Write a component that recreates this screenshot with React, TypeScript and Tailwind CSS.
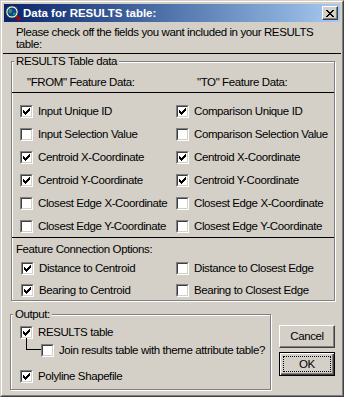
import React from "react";

const FONT = "font-['Liberation_Sans',Arial,sans-serif] tracking-[-0.4px]";

function Check({ checked }: { checked: boolean }) {
  return (
    <div className="w-[13px] h-[13px] shrink-0 border border-t-[#808080] border-l-[#808080] border-b-white border-r-white">
      <div className="w-full h-full border border-t-[#404040] border-l-[#404040] border-b-[#d4d0c8] border-r-[#d4d0c8] bg-white flex items-center justify-center">
        {checked && (
          <svg width="7" height="7" viewBox="0 0 7 7" shapeRendering="crispEdges">
            <rect x="6" y="0" width="1" height="1" fill="#000" />
            <rect x="5" y="1" width="2" height="1" fill="#000" />
            <rect x="0" y="2" width="1" height="1" fill="#000" />
            <rect x="4" y="2" width="3" height="1" fill="#000" />
            <rect x="0" y="3" width="2" height="1" fill="#000" />
            <rect x="3" y="3" width="3" height="1" fill="#000" />
            <rect x="0" y="4" width="5" height="1" fill="#000" />
            <rect x="1" y="5" width="3" height="1" fill="#000" />
            <rect x="2" y="6" width="1" height="1" fill="#000" />
          </svg>
        )}
      </div>
    </div>
  );
}

function Row({ checked, label }: { checked: boolean; label: string }) {
  return (
    <div className="flex items-center gap-[5px] h-[13px] whitespace-nowrap">
      <Check checked={checked} />
      <span className="leading-[13px]">{label}</span>
    </div>
  );
}

const etched =
  "min-w-0 border border-[#808080] shadow-[inset_1px_1px_0_#ffffff,1px_1px_0_#ffffff]";

export default function App() {
  const left: [boolean, string][] = [
    [true, "Input Unique ID"],
    [false, "Input Selection Value"],
    [true, "Centroid X-Coordinate"],
    [true, "Centroid Y-Coordinate"],
    [false, "Closest Edge X-Coordinate"],
    [false, "Closest Edge Y-Coordinate"],
  ];
  const right: [boolean, string][] = [
    [true, "Comparison Unique ID"],
    [false, "Comparison Selection Value"],
    [true, "Centroid X-Coordinate"],
    [true, "Centroid Y-Coordinate"],
    [false, "Closest Edge X-Coordinate"],
    [false, "Closest Edge Y-Coordinate"],
  ];
  return (
    <div className={`w-[344px] h-[397px] overflow-hidden bg-[#d4d0c8] border border-t-[#d4d0c8] border-l-[#d4d0c8] border-b-[#404040] border-r-[#404040] text-black text-[11.5px] ${FONT}`}>
      <div className="w-full h-full border border-t-white border-l-white border-b-[#808080] border-r-[#808080] flex flex-col">
        {/* Title bar */}
        <div className="mx-[2px] mt-[2px] h-[18px] bg-gradient-to-r from-[#0a246a] to-[#a6caf0] flex items-center tracking-normal">
          <svg width="16" height="16" viewBox="0 0 16 16" className="ml-[1px] shrink-0">
            <line x1="10" y1="10" x2="15" y2="15" stroke="#b00000" strokeWidth="3" />
            <circle cx="7" cy="7" r="6.2" fill="#ffffff" stroke="#202020" strokeWidth="1" />
            <circle cx="7" cy="7" r="4.6" fill="#1040a0" />
            <path d="M4 4 Q6 3 7 5 Q8 7 6 8 Q4 9 3.5 7 Z" fill="#20a040" />
            <path d="M8 8 Q10 7 11 9 Q10 11 8.5 10.5 Z" fill="#20a040" />
          </svg>
          <span className="ml-[2px] text-white font-bold text-[11.5px] leading-[18px] whitespace-nowrap">
            Data for RESULTS table:
          </span>
          <div className="ml-auto mr-[2px] w-[16px] h-[14px] bg-[#d4d0c8] border border-t-white border-l-white border-b-[#404040] border-r-[#404040] shadow-[inset_-1px_-1px_0_#808080] flex items-center justify-center">
            <svg width="8" height="7" viewBox="0 0 8 7" shapeRendering="crispEdges">
              <path d="M0 0h2v1h-2zM6 0h2v1h-2zM1 1h2v1h-2zM5 1h2v1h-2zM2 2h4v1h-4zM3 3h2v1h-2zM2 4h4v1h-4zM1 5h2v1h-2zM5 5h2v1h-2zM0 6h2v1h-2zM6 6h2v1h-2z" fill="#000" />
            </svg>
          </div>
        </div>

        {/* Instruction */}
        <p className="mt-[4px] ml-[14px] mr-[14px] leading-[12px]">
          Please check off the fields you want included in your RESULTS table:
        </p>
        <div className="mt-[3px] mx-[1px] h-px bg-black" />

        {/* RESULTS Table data group */}
        <fieldset className={`ml-[9px] w-[324px] mt-[1px] pb-[3px] ${etched}`}>
          <legend className="ml-[2px] px-[2px] leading-[13px] bg-[#d4d0c8]">RESULTS Table data</legend>
          <div className="mt-[8px] grid grid-cols-[164px_1fr] leading-[13px]">
            <div className="pl-[15px]">"FROM" Feature Data:</div>
            <div className="pl-[21px]">"TO" Feature Data:</div>
          </div>
          <div className="mt-[3px] h-px bg-black" />
          <div className="mt-[12px] grid grid-cols-[164px_1fr] gap-y-[10px]">
            {left.map((l, i) => (
              <React.Fragment key={i}>
                <div className="pl-[8px]">
                  <Row checked={l[0]} label={l[1]} />
                </div>
                <div>
                  <Row checked={right[i][0]} label={right[i][1]} />
                </div>
              </React.Fragment>
            ))}
          </div>
          <div className="mt-[4px] h-px bg-black" />
          <div className="mt-[5px] pl-[4px] leading-[13px]">Feature Connection Options:</div>
          <div className="mt-[6px] grid grid-cols-[164px_1fr] gap-y-[9px]">
            <div className="pl-[9px]">
              <Row checked={true} label="Distance to Centroid" />
            </div>
            <div>
              <Row checked={false} label="Distance to Closest Edge" />
            </div>
            <div className="pl-[9px]">
              <Row checked={true} label="Bearing to Centroid" />
            </div>
            <div>
              <Row checked={false} label="Bearing to Closest Edge" />
            </div>
          </div>
        </fieldset>

        {/* Bottom area */}
        <div className="flex items-start mt-[7px]">
          <fieldset className={`ml-[8px] w-[261px] pb-[6px] ${etched}`}>
            <legend className="ml-[2px] px-[2px] leading-[13px] bg-[#d4d0c8]">Output:</legend>
            <div className="mt-[5px] pl-[9px]">
              <Row checked={true} label="RESULTS table" />
            </div>
            <div className="mt-[5px] pl-[15px] flex items-start">
              <div className="w-[15px] h-[12px] -mt-[6px] border-l border-b border-black shrink-0" />
              <Row checked={false} label="Join results table with theme attribute table?" />
            </div>
            <div className="mt-[13px] pl-[9px]">
              <Row checked={true} label="Polyline Shapefile" />
            </div>
          </fieldset>
          <div className="ml-[8px] w-[56px] mt-[17px] flex flex-col gap-[4px]">
            <div className="h-[23px] border border-t-white border-l-white border-b-[#404040] border-r-[#404040] shadow-[inset_-1px_-1px_0_#808080] flex items-center justify-center leading-[13px]">
              Cancel
            </div>
            <div className="h-[24px] border border-black shadow-[inset_1px_1px_0_#ffffff,inset_-1px_-1px_0_#404040,inset_-2px_-2px_0_#808080] p-[3px]">
              <div className="w-full h-full border border-dotted border-black flex items-center justify-center leading-[13px]">
                OK
              </div>
            </div>
          </div>
        </div>
      </div>
    </div>
  );
}
